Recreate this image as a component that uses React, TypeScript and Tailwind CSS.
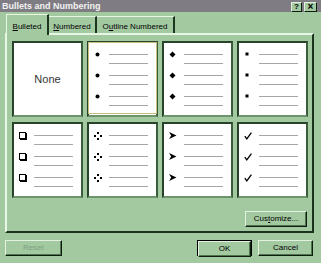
import React from 'react';

type Kind = 'dot' | 'diamond' | 'square' | 'box' | 'quad' | 'arrow' | 'check';

const Glyph: React.FC<{ kind: Kind }> = ({ kind }) => {
  switch (kind) {
    case 'dot':
      return (
        <svg width="7" height="7" viewBox="0 0 7 7" className="shrink-0">
          <circle cx="3.5" cy="3.5" r="2" fill="#000" />
        </svg>
      );
    case 'diamond':
      return (
        <svg width="7" height="7" viewBox="0 0 7 7" className="shrink-0">
          <polygon points="3.5,0.5 6.5,3.5 3.5,6.5 0.5,3.5" fill="#000" />
        </svg>
      );
    case 'square':
      return (
        <svg width="7" height="7" viewBox="0 0 7 7" className="shrink-0">
          <rect x="1.5" y="1.5" width="3" height="3" fill="#000" />
        </svg>
      );
    case 'box':
      return (
        <svg width="8" height="8" viewBox="0 0 8 8" className="shrink-0">
          <rect x="1" y="1" width="7" height="7" fill="#000" />
          <rect x="0.5" y="0.5" width="6" height="6" fill="#fff" stroke="#000" strokeWidth="1" />
        </svg>
      );
    case 'quad':
      return (
        <svg width="8" height="8" viewBox="0 0 8 8" className="shrink-0">
          <rect x="3" y="0" width="2" height="2" fill="#000" />
          <rect x="0" y="3" width="2" height="2" fill="#000" />
          <rect x="6" y="3" width="2" height="2" fill="#000" />
          <rect x="3" y="6" width="2" height="2" fill="#000" />
        </svg>
      );
    case 'arrow':
      return (
        <svg width="8" height="7" viewBox="0 0 8 7" className="shrink-0">
          <polygon points="0,0 7.5,3.5 0,7 2.2,3.5" fill="#000" />
        </svg>
      );
    case 'check':
      return (
        <svg width="8" height="8" viewBox="0 0 8 8" className="shrink-0">
          <path d="M0.8 4.2 L2.8 6.8 L7.4 0.6" fill="none" stroke="#000" strokeWidth="1.3" />
        </svg>
      );
  }
};

const Line = () => <div className="h-px w-[39px] bg-[#a6a6a6]" />;

const BulletCell: React.FC<{ kind: Kind; selected?: boolean }> = ({ kind, selected }) => (
  <div className="bg-white border-2 border-t-[#27432a] border-l-[#27432a] border-r-[#3a5e3c] border-b-[#6d946c]">
    <div className={`h-full flex flex-col gap-[11px] pt-[11px] pl-[5px] ${selected ? 'border border-[#c9bd7e] -m-px' : ''}`}>
      {[0, 1, 2].map(i => (
        <div key={i} className="flex items-start">
          <div className="w-[15px] h-px flex items-center">
            <Glyph kind={kind} />
          </div>
          <div className="flex flex-col gap-[8px]">
            <Line />
            <Line />
          </div>
        </div>
      ))}
    </div>
  </div>
);

const btn =
  'flex items-center justify-center h-[16px] text-[8px] border border-t-[#e2f2de] border-l-[#e2f2de] border-r-[#0f1f0f] border-b-[#0f1f0f] shadow-[inset_-1px_-1px_#4f754f]';

const App: React.FC = () => {
  return (
    <div className="w-[321px] h-[263px] bg-[#a3c9a1] flex flex-col overflow-hidden text-black" style={{ fontFamily: '"Liberation Sans", Arial, sans-serif' }}>
      {/* title bar */}
      <div className="h-[12px] bg-[#7f7d83] flex items-center justify-between pl-[2px] pr-[4px]">
        <span className="text-[9px] font-bold text-[#f2f2f2] leading-none">Bullets and Numbering</span>
        <div className="flex gap-[2px] pt-px">
          <div className="w-[11px] h-[10px] bg-[#a3c9a1] border border-t-[#e2f2de] border-l-[#e2f2de] border-r-[#0f1f0f] border-b-[#0f1f0f] flex items-center justify-center text-[8px] font-bold leading-none">?</div>
          <div className="w-[13px] h-[10px] bg-[#a3c9a1] border border-t-[#e2f2de] border-l-[#e2f2de] border-r-[#0f1f0f] border-b-[#0f1f0f] flex items-center justify-center text-[10px] font-bold leading-none">×</div>
        </div>
      </div>

      {/* tabs */}
      <div className="mt-[2px] h-[19px] flex items-end pl-[6px] relative z-10 text-[8px]">
        <div className="self-start h-[21px] w-[43px] bg-[#a3c9a1] border-t border-l border-t-[#e8f6e4] border-l-[#e8f6e4] border-r-2 border-r-[#1d361f] flex justify-center pt-[6px]">
          <span><span className="underline">B</span>ulleted</span>
        </div>
        <div className="h-[17px] w-[48px] border-t border-t-[#e8f6e4] border-r-2 border-r-[#1d361f] flex justify-center pt-[4px]">
          <span><span className="underline">N</span>umbered</span>
        </div>
        <div className="h-[17px] w-[78px] border-t border-t-[#e8f6e4] border-r-2 border-r-[#1d361f] flex justify-center pt-[4px]">
          <span>O<span className="underline">u</span>tline Numbered</span>
        </div>
      </div>

      {/* panel */}
      <div className="ml-[5px] mr-[7px] h-[200px] border-2 border-t-[#e8f6e4] border-l-[#e8f6e4] border-r-[#1b321c] border-b-[#1b321c] pt-[6px] pl-[5px] flex flex-col">
        <div className="w-[296px] grid grid-cols-4 grid-rows-[76px_76px] gap-x-[4px] gap-y-[5px]">
          <div className="bg-white border-2 border-t-[#27432a] border-l-[#27432a] border-r-[#3a5e3c] border-b-[#6d946c] flex items-center justify-center">
            <span className="text-[11px] text-[#333]">None</span>
          </div>
          <BulletCell kind="dot" selected />
          <BulletCell kind="diamond" />
          <BulletCell kind="square" />
          <BulletCell kind="box" />
          <BulletCell kind="quad" />
          <BulletCell kind="arrow" />
          <BulletCell kind="check" />
        </div>
        <div className="w-[296px] flex justify-end mt-[13px]">
          <div className={`${btn} w-[62px] h-[15px] mr-px`}>
            <span>Cus<span className="underline">t</span>omize...</span>
          </div>
        </div>
      </div>

      {/* bottom buttons */}
      <div className="mt-[7px] flex pl-[5px] pr-[8px]">
        <div className={`${btn} w-[57px] text-[#7fa37f]`}>Reset</div>
        <div className="flex-1" />
        <div className="w-[55px] h-[16px] border border-black">
          <div className={`${btn} h-[14px] w-full`}>OK</div>
        </div>
        <div className={`${btn} w-[55px] ml-[6px]`}>Cancel</div>
      </div>
    </div>
  );
};

export default App;
